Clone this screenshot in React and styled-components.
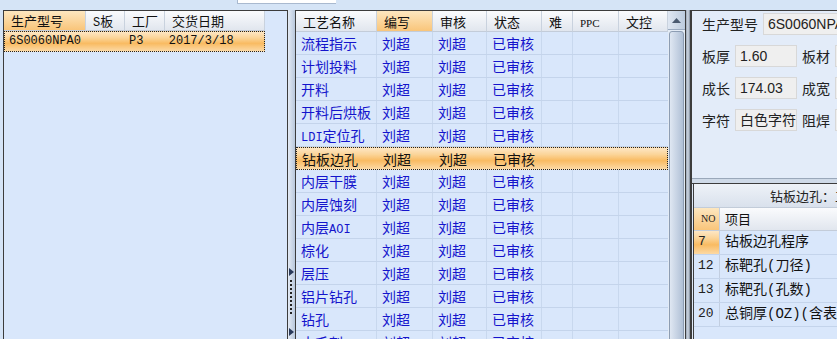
import React from 'react'
import styled, { createGlobalStyle, css } from 'styled-components'

const GlobalStyle = createGlobalStyle`
  body {
    margin: 0;
    background: #d5e4f6;
    font-family: "Noto Sans CJK SC", sans-serif;
    overflow: hidden;
  }
`

const cjk = `"Noto Sans CJK SC", sans-serif`
const mono = `"Liberation Mono", "Noto Sans CJK SC", monospace`

const steps = [
  '流程指示', '计划投料', '开料', '开料后烘板', ['LDI', '定位孔'], '钻板边孔',
  '内层干膜', '内层蚀刻', ['内层', 'AOI'], '棕化', '层压', '铝片钻孔', '钻孔', '去毛刺',
]

const items = [
  { no: '7', name: '钻板边孔程序', current: true },
  { no: '12', name: '标靶孔(刀径)' },
  { no: '13', name: '标靶孔(孔数)' },
  { no: '20', name: '总铜厚(OZ)(含表铜)' },
]

function StepName({ value }) {
  if (typeof value === 'string') return value
  return value.map((part, i) => /^[A-Z]+$/.test(part) ? <Latin key={i}>{part}</Latin> : part)
}

function App() {
  return (
    <>
      <GlobalStyle />
      <Frame>
        <TopStrip>
          <TabStub />
        </TopStrip>
        <Main>
          <LeftPanel>
            <LeftHeader>
              <HeadCell w={82} sorted>生产型号</HeadCell>
              <HeadCell w={39}><Latin>S</Latin>板</HeadCell>
              <HeadCell w={40}>工厂</HeadCell>
              <HeadCell w={100}>交货日期</HeadCell>
            </LeftHeader>
            <LeftRow>
              <LeftCell w={121}>6S0060NPA0</LeftCell>
              <LeftCell w={40}>P3</LeftCell>
              <LeftCell w={100}>2017/3/18</LeftCell>
            </LeftRow>
          </LeftPanel>

          <Splitter>
            <Arrow top={258} />
            <Grip />
            <Arrow top={318} />
          </Splitter>

          <MidPanel>
            <MidBody>
              <MidGrid>
                <MidHeader>
                  <HeadCell w={81}>工艺名称</HeadCell>
                  <HeadCell w={56} sorted>编写</HeadCell>
                  <HeadCell w={54}>审核</HeadCell>
                  <HeadCell w={55}>状态</HeadCell>
                  <HeadCell w={31}>难</HeadCell>
                  <HeadCell w={46}><Small>PPC</Small></HeadCell>
                  <HeadCell w={49}>文控</HeadCell>
                </MidHeader>
                {steps.map((s, i) => (
                  <StepRow key={i} selected={i === 5}>
                    <StepCell w={81}><StepName value={s} /></StepCell>
                    <StepCell w={56}>刘超</StepCell>
                    <StepCell w={54}>刘超</StepCell>
                    <StepCell w={55}>已审核</StepCell>
                    <StepCell w={31} />
                    <StepCell w={46} />
                    <StepCell w={49} last />
                  </StepRow>
                ))}
              </MidGrid>
              <ScrollBar>
                <ScrollButton>
                  <svg width="9" height="5" viewBox="0 0 9 5">
                    <path d="M0 5 L4.5 0 L9 5 Z" fill="#4a5a70" />
                  </svg>
                </ScrollButton>
                <Thumb />
              </ScrollBar>
            </MidBody>
          </MidPanel>

          <ThinSplitter />

          <RightPanel>
            <InfoBox>
              <InfoRow>
                <Label>生产型号</Label>
                <Field wide>6S0060NPA0</Field>
              </InfoRow>
              <InfoRow>
                <Label>板厚</Label>
                <Field>1.60</Field>
                <Label>板材</Label>
                <Field wide />
              </InfoRow>
              <InfoRow>
                <Label>成长</Label>
                <Field>174.03</Field>
                <Label>成宽</Label>
                <Field wide />
              </InfoRow>
              <InfoRow>
                <Label>字符</Label>
                <Field>白色字符</Field>
                <Label>阻焊</Label>
                <Field wide />
              </InfoRow>
            </InfoBox>
            <HSplit />
            <DetailBox>
              <DetailTitle>钻板边孔：工艺参数明细</DetailTitle>
              <DetailHeader>
                <NoCell head>NO</NoCell>
                <ItemCell head>项目</ItemCell>
              </DetailHeader>
              {items.map(it => (
                <DetailRow key={it.no}>
                  <NoCell current={it.current}>{it.no}</NoCell>
                  <ItemCell>{it.name}</ItemCell>
                </DetailRow>
              ))}
            </DetailBox>
          </RightPanel>
        </Main>
      </Frame>
    </>
  )
}

export default App

const orangeHead = css`
  background: linear-gradient(#fde7c0, #f9c57a);
`

const orangeRow = css`
  background: linear-gradient(#fde6c4 0%, #fbd59a 30%, #f9bb62 60%, #fcd9a4 100%);
`

const Frame = styled.div`
  height: 339px;
  display: flex;
  flex-direction: column;
`
const TopStrip = styled.div`
  height: 10px;
  flex-shrink: 0;
`
const TabStub = styled.div`
  margin-left: 237px;
  width: 98px;
  height: 3px;
  background: #fff;
  border-left: 1px solid #a9b9cf;
  border-bottom: 1px solid #a9b9cf;
`
const Main = styled.div`
  flex: 1;
  display: flex;
  min-height: 0;
`
const Latin = styled.span`
  font-family: ${mono};
  font-size: 12px;
`
const Small = styled.span`
  font-family: "Liberation Serif", serif;
  font-size: 11px;
`

const LeftPanel = styled.div`
  margin-left: 3px;
  width: 283px;
  background: #d9e7fb;
  border: 1px solid #3c3c3c;
  border-bottom: none;
`
const LeftHeader = styled.div`
  display: flex;
  height: 20px;
`
const HeadCell = styled.div`
  width: ${p => p.w}px;
  flex-shrink: 0;
  box-sizing: border-box;
  padding-left: 7px;
  font-size: 13px;
  line-height: 20px;
  color: #111;
  background: linear-gradient(#fafbfd, #e1e6ee);
  border-right: 1px solid #c9d2de;
  border-bottom: 1px solid #c3ccd9;
  ${p => p.sorted && orangeHead}
`
const LeftRow = styled.div`
  display: flex;
  width: 261px;
  height: 21px;
  box-sizing: border-box;
  border: 1px dotted #222;
  ${orangeRow}
`
const LeftCell = styled.div`
  width: ${p => p.w}px;
  box-sizing: border-box;
  padding-left: 4px;
  font-family: ${mono};
  font-size: 12px;
  line-height: 19px;
  color: #111;
`

const Splitter = styled.div`
  position: relative;
  width: 7px;
  background: linear-gradient(90deg, #e4ebf5, #b9c8dc);
`
const Grip = styled.div`
  position: absolute;
  left: 2px;
  top: 270px;
  width: 2px;
  height: 34px;
  background: repeating-linear-gradient(#222 0 2px, transparent 2px 4px);
`
const Arrow = styled.div`
  position: absolute;
  left: 1px;
  top: ${p => p.top}px;
  width: 0;
  height: 0;
  border-top: 4px solid transparent;
  border-bottom: 4px solid transparent;
  border-left: 5px solid #2a3a5a;
`

const MidPanel = styled.div`
  width: 389px;
  border: 1px solid #3c3c3c;
  border-bottom: none;
  background: #d9e7fb;
  overflow: hidden;
`
const MidBody = styled.div`
  display: flex;
`
const MidGrid = styled.div`
  width: 372px;
`
const MidHeader = styled.div`
  display: flex;
  height: 21px;
  & > div { line-height: 21px; }
`
const StepRow = styled.div`
  display: flex;
  height: 23px;
  box-sizing: border-box;
  border-bottom: 1px solid #c4d4eb;
  color: #1414cc;
  ${p => p.selected && css`
    ${orangeRow}
    color: #111;
    border: 1px dotted #222;
    & > div { border-right-color: transparent; }
  `}
`
const StepCell = styled.div`
  width: ${p => p.w}px;
  flex-shrink: 0;
  box-sizing: border-box;
  padding-left: 5px;
  font-family: ${cjk};
  font-size: 14px;
  line-height: 22px;
  white-space: nowrap;
  border-right: 1px solid ${p => p.last ? 'transparent' : '#c8d8ee'};
`
const ScrollBar = styled.div`
  width: 17px;
  display: flex;
  flex-direction: column;
  background: #e3ebf5;
`
const ScrollButton = styled.div`
  height: 18px;
  display: flex;
  align-items: center;
  justify-content: center;
  background: linear-gradient(90deg, #dfe7f2, #bccbdd);
  border-bottom: 1px solid #9aaac0;
`
const Thumb = styled.div`
  flex: 1;
  height: 330px;
  margin: 1px 1px 0;
  border-radius: 3px 3px 0 0;
  border: 1px solid #8d9db3;
  background: linear-gradient(90deg, #dfe7f2, #b0c0d6);
`

const ThinSplitter = styled.div`
  width: 4px;
  background: linear-gradient(90deg, #9aa6b6, #cfd8e4, #7f8b9b);
`

const RightPanel = styled.div`
  flex: 1;
  min-width: 0;
  display: flex;
  flex-direction: column;
  border-left: 2px solid #3c3c3c;
  border-top: 1px solid #3c3c3c;
  background: #dfe9f7;
`
const InfoBox = styled.div`
  height: 167px;
  box-sizing: border-box;
  padding: 2px 0 0 10px;
  display: flex;
  flex-direction: column;
  gap: 10px;
  background: #e3ecf9;
  overflow: hidden;
`
const InfoRow = styled.div`
  display: flex;
  align-items: center;
  gap: 5px;
  height: 22px;
  white-space: nowrap;
`
const Label = styled.div`
  font-size: 14px;
  color: #222;
  flex-shrink: 0;
`
const Field = styled.div`
  width: ${p => p.wide ? '120px' : '62px'};
  flex-shrink: 0;
  height: 22px;
  box-sizing: border-box;
  padding-left: 4px;
  font-family: "Liberation Sans", ${cjk};
  font-size: 14px;
  line-height: 21px;
  color: #222;
  background: #efefef;
  border: 1px solid #d8d8d8;
`
const HSplit = styled.div`
  height: 4px;
  background: #cfdae8;
  border-top: 1px solid #9aa8ba;
  border-bottom: 1px solid #3c3c3c;
`
const DetailBox = styled.div`
  flex: 1;
  margin-left: 1px;
  border-left: 1px solid #3c3c3c;
  background: #d9e7fb;
  overflow: hidden;
`
const DetailTitle = styled.div`
  height: 23px;
  padding-left: 76px;
  font-size: 13px;
  line-height: 23px;
  white-space: nowrap;
  color: #222;
  background: linear-gradient(#eef2f8, #d9e1ec);
  border-bottom: 1px solid #c2ccd9;
`
const DetailHeader = styled.div`
  display: flex;
  height: 22px;
  background: linear-gradient(#fafbfd, #e1e6ee);
  border-bottom: 1px solid #c3ccd9;
`
const DetailRow = styled.div`
  display: flex;
  height: 23px;
  border-bottom: 1px solid #c4d4eb;
`
const NoCell = styled.div`
  width: 26px;
  flex-shrink: 0;
  box-sizing: border-box;
  padding-left: 4px;
  font-family: ${mono};
  font-size: 13px;
  line-height: 22px;
  color: #222;
  border-right: 1px solid #c2cee0;
  ${p => p.head && css`
    ${orangeHead}
    font-family: "Liberation Serif", serif;
    font-size: 10px;
    padding-left: 7px;
  `}
  ${p => p.current && orangeRow}
`
const ItemCell = styled.div`
  flex: 1;
  padding-left: 5px;
  font-family: ${mono};
  font-size: 14px;
  line-height: 22px;
  white-space: nowrap;
  color: #111;
  ${p => p.head && css`
    font-family: ${cjk};
    font-size: 13px;
  `}
`
